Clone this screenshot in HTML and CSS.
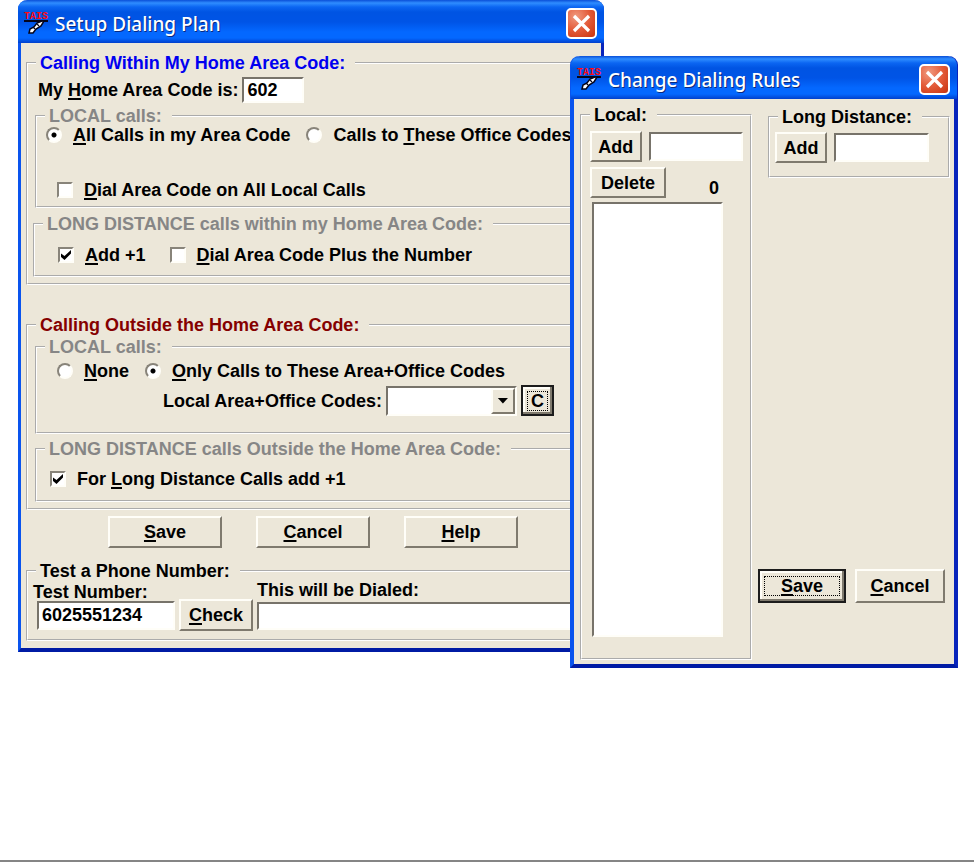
FILE: index.html
```html
<!DOCTYPE html>
<html lang="en">
<head>
<meta charset="utf-8">
<title>Setup Dialing Plan</title>
<link rel="stylesheet" href="styles.css">
</head>
<body>
<main class="desktop">
  <section class="window window-plan">
    <header class="titlebar">
      <svg class="app-icon" viewBox="0 0 24 22" aria-hidden="true">
        <text x="0" y="7">TAIS</text>
        <path d="M0 8h24v2H0z" fill="#05051a"/>
        <path d="M18 9l-5 2-3 4-4 2-1 4 4 0 3-4 5-3 3-5z" fill="#fff" stroke="#05051a" stroke-width="1.500"/>
        <path d="M9 15l2 2M13 12l2 2" stroke="#05051a" stroke-width="1.200"/>
      </svg>
      <h1>Setup Dialing Plan</h1>
      <button class="close" type="button" aria-label="Close"><svg viewBox="0 0 27 27"><path d="M6 6l15 15M21 6L6 21" fill="none" stroke="#fff" stroke-width="3.200"/></svg></button>
    </header>
    <form class="client plan">
      <fieldset class="group">
        <legend class="blue">Calling Within My Home Area Code:</legend>
        <div class="row home-row">
          <label for="home">My <u>H</u>ome Area Code is:</label>
          <input class="field home-code" id="home" type="text" value="602">
        </div>
        <fieldset class="subgroup local-in">
          <legend>LOCAL calls:</legend>
          <div class="row radios-in">
            <input type="radio" name="in" id="in-all" checked><label for="in-all"><u>A</u>ll Calls in my Area Code</label>
            <input type="radio" name="in" id="in-codes"><label for="in-codes">Calls to <u>T</u>hese Office Codes</label>
          </div>
          <div class="row dial-all">
            <input type="checkbox" id="dial-all"><label for="dial-all"><u>D</u>ial Area Code on All Local Calls</label>
          </div>
        </fieldset>
        <fieldset class="subgroup long-in">
          <legend>LONG DISTANCE calls within my Home Area Code:</legend>
          <div class="row">
            <input type="checkbox" id="add1" checked><label for="add1"><u>A</u>dd +1</label>
            <input type="checkbox" id="dial-plus"><label for="dial-plus"><u>D</u>ial Area Code Plus the Number</label>
          </div>
        </fieldset>
      </fieldset>

      <fieldset class="group outside">
        <legend class="maroon">Calling Outside the Home Area Code:</legend>
        <fieldset class="subgroup local-out">
          <legend>LOCAL calls:</legend>
          <div class="row radios-out">
            <input type="radio" name="out" id="out-none"><label for="out-none"><u>N</u>one</label>
            <input type="radio" name="out" id="out-only" checked><label for="out-only"><u>O</u>nly Calls to These Area+Office Codes</label>
          </div>
          <div class="row codes-row">
            <label for="codes">Local Area+Office Codes:</label>
            <span class="combo"><select id="codes"><option></option></select><span class="combo-arrow"></span></span>
            <button class="btn default change" type="button"><span>C</span></button>
          </div>
        </fieldset>
        <fieldset class="subgroup long-out">
          <legend>LONG DISTANCE calls Outside the Home Area Code:</legend>
          <div class="row">
            <input type="checkbox" id="ld1" checked><label for="ld1">For <u>L</u>ong Distance Calls add +1</label>
          </div>
        </fieldset>
      </fieldset>

      <div class="actions">
        <button class="btn" type="button"><u>S</u>ave</button>
        <button class="btn" type="button"><u>C</u>ancel</button>
        <button class="btn" type="button"><u>H</u>elp</button>
      </div>

      <fieldset class="group test">
        <legend>Test a Phone Number:</legend>
        <div class="test-row">
          <div class="test-number"><label for="num">Test Number:</label><input class="field" id="num" type="text" value="6025551234"></div>
          <button class="btn check" type="button"><u>C</u>heck</button>
          <div class="dialed"><label for="dialed">This will be Dialed:</label><input class="field" id="dialed" type="text"></div>
        </div>
      </fieldset>
    </form>
  </section>

  <section class="window window-rules">
    <header class="titlebar">
      <svg class="app-icon" viewBox="0 0 24 22" aria-hidden="true">
        <text x="0" y="7">TAIS</text>
        <path d="M0 8h24v2H0z" fill="#05051a"/>
        <path d="M18 9l-5 2-3 4-4 2-1 4 4 0 3-4 5-3 3-5z" fill="#fff" stroke="#05051a" stroke-width="1.500"/>
        <path d="M9 15l2 2M13 12l2 2" stroke="#05051a" stroke-width="1.200"/>
      </svg>
      <h1>Change Dialing Rules</h1>
      <button class="close" type="button" aria-label="Close"><svg viewBox="0 0 27 27"><path d="M6 6l15 15M21 6L6 21" fill="none" stroke="#fff" stroke-width="3.200"/></svg></button>
    </header>
    <form class="client rules">
      <fieldset class="group local-list">
        <legend>Local:</legend>
        <div class="row add-row">
          <button class="btn" type="button">Add</button>
          <input class="field" type="text" aria-label="Local code">
        </div>
        <div class="row delete-row">
          <button class="btn" type="button">Delete</button>
          <output>0</output>
        </div>
        <select class="field list" size="20" aria-label="Local codes"></select>
      </fieldset>
      <div class="side">
        <fieldset class="group distance">
          <legend>Long Distance:</legend>
          <div class="row add-row">
            <button class="btn" type="button">Add</button>
            <input class="field" type="text" aria-label="Long distance code">
          </div>
        </fieldset>
        <div class="side-actions">
          <button class="btn default" type="button"><span><u>S</u>ave</span></button>
          <button class="btn" type="button"><u>C</u>ancel</button>
        </div>
      </div>
    </form>
  </section>
</main>
</body>
</html>
```
FILE: styles.css
```css
* { box-sizing: border-box; }

body {
  margin: 0;
  background: #fff;
  color: #000;
  font: bold 18px/18px "Liberation Sans", Arial, sans-serif;
}

.desktop {
  display: grid;
  grid-template-columns: 18px 1fr 34px 354px 16px;
  align-items: start;
  min-height: 100vh;
  border-bottom: 2px solid #858585;
}

/* Windows */
.window {
  grid-row: 1;
  background: #ece7d9;
  border: solid #0a54ee;
  border-width: 0 3px 4px;
  border-right-color: #0824bc;
  border-bottom-color: #001ba4;
  border-radius: 9px 9px 0 0;
}
.window-plan { grid-column: 2 / 4; }
.window-rules { grid-column: 3 / 5; margin-top: 56px; z-index: 1; border-width: 0 4px 4px; }

.titlebar {
  display: flex;
  align-items: center;
  height: 43px;
  margin: 0 -3px;
  padding: 3px 7px 0 6px;
  border-radius: 9px 9px 0 0;
  background: linear-gradient(#0a4fd8 0, #2f8dff 3px, #0b66f2 7px, #0054e3 12px, #0054e6 22px, #0468ff 32px, #0468ff 38px, #0140cc 43px);
}
.titlebar h1 {
  flex: 1;
  margin: 0;
  padding-top: 2px;
  color: #fff;
  font: 500 19px/26px "Noto Sans", "Open Sans", sans-serif;
  text-shadow: 1px 1px #0a2a80;
}
.app-icon { width: 24px; height: 22px; margin-right: 7px; overflow: visible; }
.app-icon text { fill: #ff0a12; font: bold 10px "Liberation Mono", monospace; }

.close {
  width: 31px;
  height: 31px;
  padding: 0;
  border: 2px solid #fff;
  border-radius: 5px;
  background: radial-gradient(circle at 30% 25%, #f09a80, #e35a38 50%, #c8330f);
}
.close svg { display: block; width: 27px; height: 27px; }

/* Groups */
fieldset {
  min-width: 0;
  margin: 0;
  padding: 0;
  border: 2px groove #fff;
}
legend { margin-left: 8px; padding: 0 10px 0 4px; white-space: nowrap; }
.subgroup > legend { color: #868686; }
.group > .blue { color: #0000f0; }
.group > .maroon { color: #850000; }

.row { display: flex; align-items: center; min-height: 20px; white-space: nowrap; }
u { text-underline-offset: 2px; text-decoration-thickness: 2px; text-decoration-skip-ink: none; }

/* Controls */
.field {
  min-width: 0;
  height: 29px;
  margin: 0;
  padding: 0 3px;
  border: 2px solid;
  border-color: #77736a #fffef8 #fffef8 #77736a;
  border-radius: 0;
  background: #fff;
  color: #000;
  font: inherit;
  outline: 0;
}

.btn {
  height: 31px;
  padding: 0;
  border: 2px solid;
  border-color: #fffef8 #7f7a6e #7f7a6e #fffef8;
  border-radius: 0;
  background: #ece7d9;
  color: #000;
  font: inherit;
}
.btn.default {
  padding: 4px;
  border-color: #1c1c1c;
  box-shadow: inset -2px -2px #7f7a6e, inset 2px 2px #fffef8;
}
.btn.default span { display: block; border: 1px dotted #000; }

input[type="radio"], input[type="checkbox"] {
  appearance: none;
  flex: none;
  width: 16px;
  height: 16px;
  margin: 0 11px 0 0;
  border: 2px solid;
  border-color: #88847a #fffef8 #fffef8 #88847a;
  background: #fff;
}
input[type="radio"] { border-radius: 50%; }
input[type="radio"]:checked { background: radial-gradient(circle, #000 0 2px, #fff 3px); }
input[type="checkbox"]:checked::before {
  content: "";
  display: block;
  width: 10px;
  height: 10px;
  margin: 1px;
  background: #000;
  clip-path: polygon(0 35%, 35% 60%, 100% 0, 100% 35%, 35% 100%, 0 70%);
}
label + input[type="radio"] { margin-left: 16px; }
label + input[type="checkbox"] { margin-left: 24px; }

/* Dialing plan */
.plan { padding: 11px 5px 7px; }
.plan > .group { padding-bottom: 6px; }
.home-row { margin-top: 5px; padding-left: 10px; height: 26px; }
.home-row .field { width: 62px; height: 26px; margin-left: 4px; }

.local-in { margin: 4px 6px 0 7px; padding-bottom: 6px; }
.radios-in { padding-left: 9px; }
.dial-all { margin-top: 35px; padding-left: 20px; }
.long-in { margin: 7px 6px 0 5px; padding: 12px 0 10px; }
.long-in .row { padding-left: 23px; }

.plan > .outside { margin-top: 31px; }
.local-out { margin: 4px 6px 0 7px; padding: 5px 0 16px; }
.radios-out { padding-left: 20px; }
.codes-row { margin-top: 4px; padding-left: 126px; height: 31px; }
.combo { position: relative; flex: none; width: 131px; height: 30px; margin: 0 4px 0 4px; }
.combo select {
  appearance: none;
  width: 100%;
  height: 100%;
  border: 2px solid;
  border-color: #77736a #fffef8 #fffef8 #77736a;
  border-radius: 0;
  background: #fff;
  font: inherit;
}
.combo-arrow {
  position: absolute;
  top: 2px;
  right: 2px;
  bottom: 2px;
  width: 24px;
  border: 2px solid;
  border-color: #fffef8 #7f7a6e #7f7a6e #fffef8;
  background: #ece7d9;
  pointer-events: none;
}
.combo-arrow::before {
  content: "";
  display: block;
  margin: 8px auto 0;
  width: 11px;
  height: 6px;
  background: #000;
  clip-path: polygon(0 0, 100% 0, 50% 100%);
}
.change { width: 33px; }
.long-out { margin: 6px 6px 0 7px; padding: 11px 0; }
.long-out .row { padding-left: 13px; }

.actions { display: flex; gap: 34px; margin: 6px 0 14px; padding-left: 82px; }
.actions .btn { width: 114px; height: 32px; }

.plan > .test { padding: 1px 0 8px; }
.test-row { display: flex; align-items: flex-end; padding-left: 5px; }
.test-row label { display: block; white-space: nowrap; }
.test-number { width: 142px; padding-bottom: 1px; }
.test-number .field { width: 138px; margin-left: 4px; }
.check { width: 74px; height: 32px; margin: 0 4px; }
.dialed { flex: 1; padding-bottom: 1px; }
.dialed .field { width: 100%; height: 28px; }
.dialed label { margin-bottom: 3px; }

/* Dialing rules */
.rules { display: flex; gap: 16px; padding: 7px 4px 4px 6px; }
.local-list { flex: none; width: 172px; padding: 7px 7px 21px 0; }
.local-list > :not(legend) { margin-left: 8px; }
.add-row { gap: 7px; }
.add-row .btn { width: 52px; }
.add-row .field { width: 95px; }
.delete-row { margin: 5px 0 4px; justify-content: space-between; }
.delete-row .btn { width: 76px; }
.delete-row output { margin: 10px 24px 0 0; }
.local-list > .list { display: block; width: 131px; height: 435px; margin-left: 10px; overflow: hidden; }
.side { flex: 1; display: flex; flex-direction: column; min-width: 0; padding-top: 2px; }
.distance { padding: 6px 0 13px; }
.distance .add-row { padding-left: 5px; }
.side-actions { display: flex; justify-content: flex-end; gap: 9px; margin: auto 5px 57px -12px; }
.side-actions .btn { flex: none; width: 90px; height: 34px; }
.side-actions .default { width: 88px; }
```
